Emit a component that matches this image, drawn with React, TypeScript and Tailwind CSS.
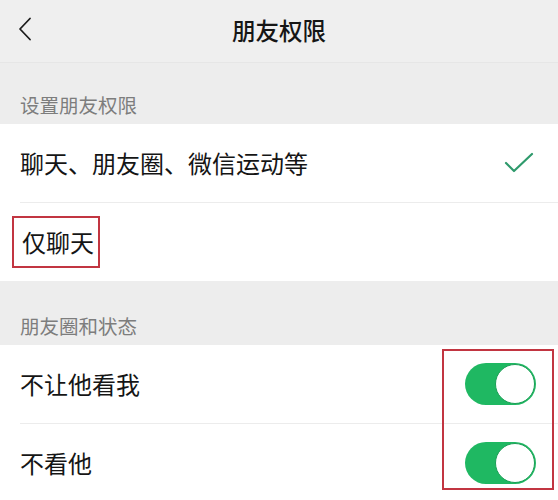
import React from 'react';

const font = { fontFamily: '"Noto Sans CJK SC", "Noto Sans", sans-serif' };

function Toggle() {
  return (
    <div className="flex h-[42px] w-[71px] items-center justify-end rounded-full bg-[#1fb862] p-[1px]">
      <div className="h-[40px] w-[40px] rounded-full border border-[#1a9e55] bg-white" />
    </div>
  );
}

function Check() {
  return (
    <svg width="30" height="22" viewBox="0 0 30 22" fill="none">
      <path d="M2 11 L10 19 L28 2" stroke="#2f9a6c" strokeWidth="2.2" strokeLinecap="round" strokeLinejoin="round" />
    </svg>
  );
}

function SectionLabel({ text, h }: { text: string; h: string }) {
  return (
    <div className={`flex ${h} items-end pb-[10px] pl-[20px] text-[19.5px] leading-none text-[#7d7d7d]`}>
      {text}
    </div>
  );
}

export default function App() {
  return (
    <div className="h-[500px] w-[558px] overflow-hidden bg-[#ededed]" style={font}>
      {/* top bar */}
      <div className="relative flex h-[63px] items-center justify-center border-b border-[#e6e6e6] bg-[#efefef]">
        <svg className="absolute left-[17px] top-[17px]" width="16" height="24" viewBox="0 0 16 24" fill="none">
          <path d="M13 1.5 L3 12 L13 22.5" stroke="#1c1c1c" strokeWidth="1.8" strokeLinecap="round" strokeLinejoin="round" />
        </svg>
        <span className="text-[23.5px] font-medium leading-none text-[#161616]">朋友权限</span>
      </div>

      <SectionLabel text="设置朋友权限" h="h-[61px]" />

      <div className="bg-white">
        <div className="flex h-[78px] items-center justify-between pl-[20px] pr-[24px]">
          <span className="text-[24px] leading-none text-[#151515]">聊天、朋友圈、微信运动等</span>
          <Check />
        </div>
        <div className="ml-[20px] h-px bg-[#ececec]" />
        <div className="flex h-[78px] items-center pl-[12px]">
          <span className="flex h-[52px] items-center border-2 border-[#c23541] pl-[8px] pr-[4px] text-[24px] leading-none text-[#151515]">
            仅聊天
          </span>
        </div>
      </div>

      <SectionLabel text="朋友圈和状态" h="h-[64px]" />

      <div className="relative bg-white">
        <div className="flex h-[78px] items-center justify-between pl-[20px] pr-[22px]">
          <span className="text-[24px] leading-none text-[#151515]">不让他看我</span>
          <Toggle />
        </div>
        <div className="ml-[20px] h-px bg-[#ececec]" />
        <div className="flex h-[78px] items-center justify-between pl-[20px] pr-[22px]">
          <span className="text-[24px] leading-none text-[#151515]">不看他</span>
          <Toggle />
        </div>
        <div className="absolute right-[4px] top-[4px] h-[141px] w-[112px] border-2 border-[#c23541]" />
      </div>
    </div>
  );
}
